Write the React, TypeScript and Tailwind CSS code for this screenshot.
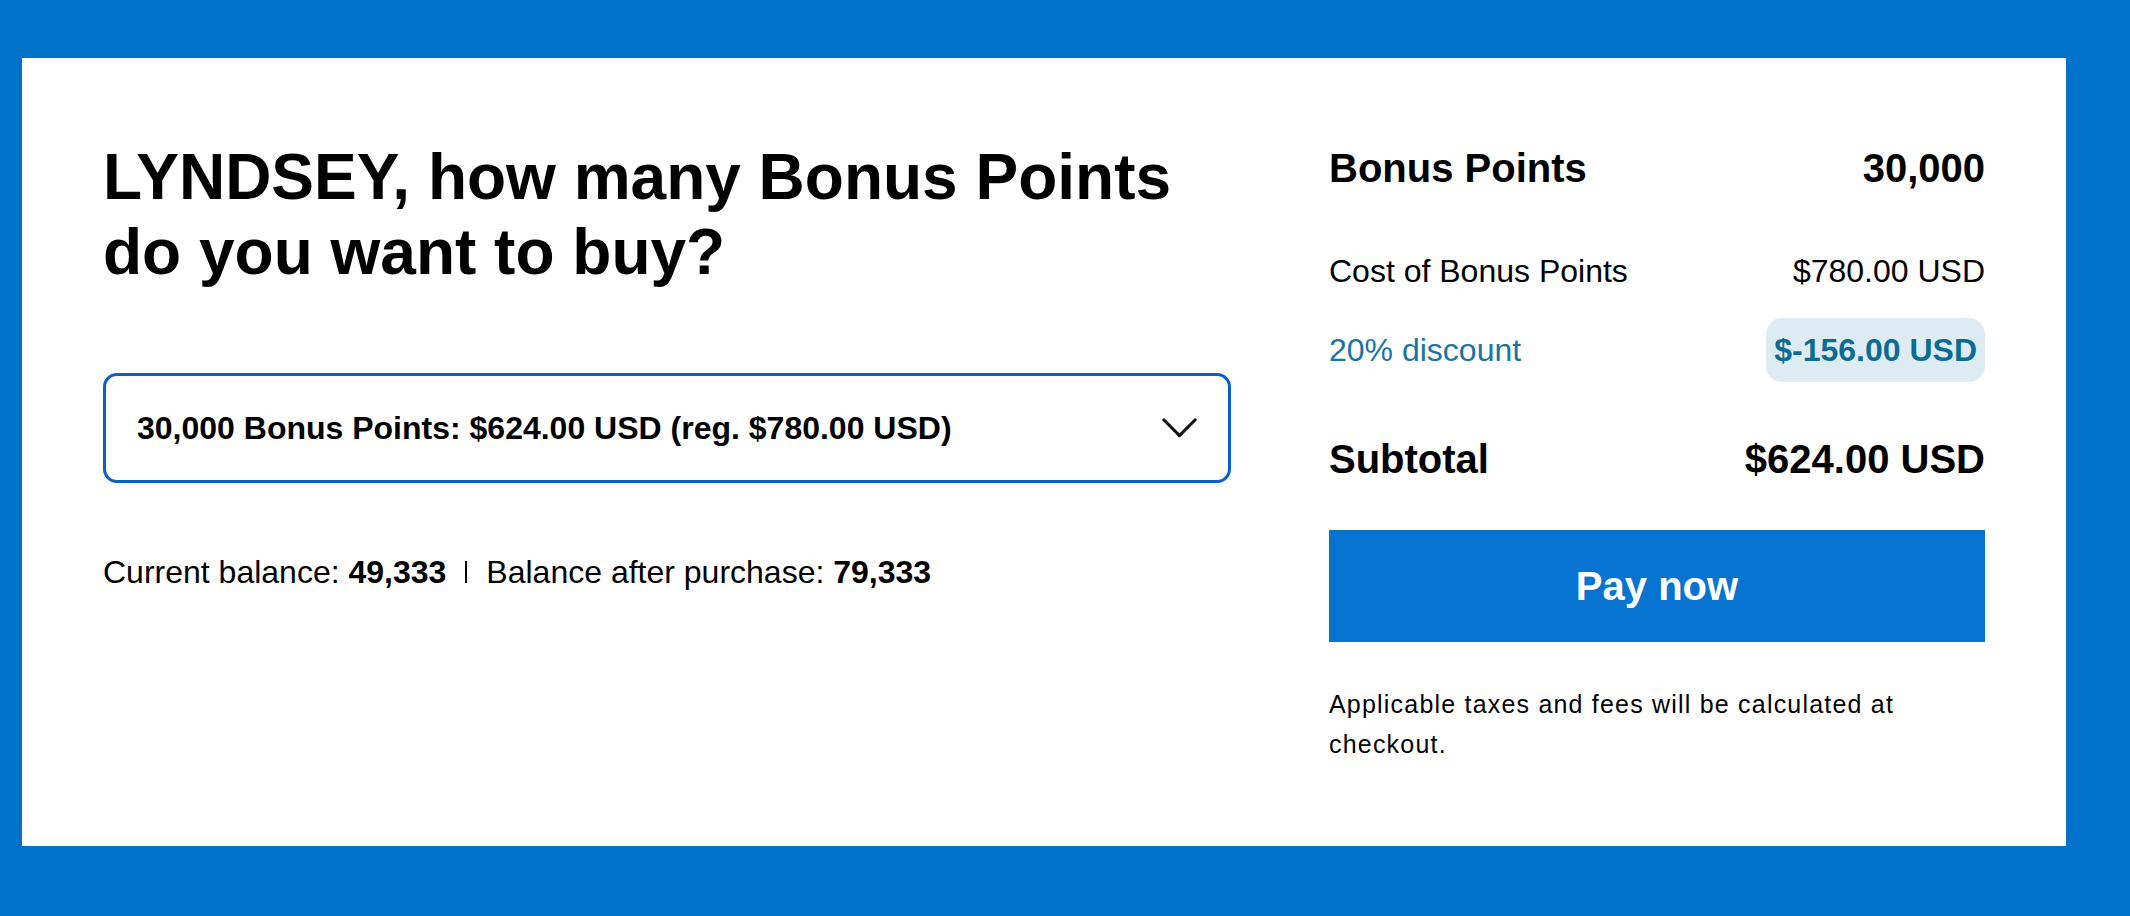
const FONT = "font-['Liberation_Sans',Arial,sans-serif]";

function Chevron() {
  return (
    <svg width="35" height="20" viewBox="0 0 35 20" fill="none" aria-hidden="true">
      <polyline points="1.8,1.8 17.5,17.6 33.2,1.8" stroke="#111" strokeWidth="3" strokeLinecap="round" strokeLinejoin="round" />
    </svg>
  );
}

function PointsPicker() {
  return (
    <div className="w-[1128px] shrink-0">
      <h1 className="text-[64px] leading-[75px] font-bold text-black">
        LYNDSEY, how many Bonus Points
        <br />
        do you want to buy?
      </h1>

      {/* select box */}
      <div className="mt-[83px] h-[110px] flex items-center justify-between px-[31px] border-[3px] border-[#0a5fc9] rounded-[14px] bg-white">
        <span className="text-[32px] leading-[40px] font-bold text-black">
          30,000 Bonus Points: $624.00 USD (reg. $780.00 USD)
        </span>
        <Chevron />
      </div>

      <p className="mt-[69px] text-[32px] leading-[40px] text-black">
        Current balance: <b className="font-bold">49,333</b>
        <span className="inline-block w-[2px] h-[22px] bg-black mx-[19px]" />
        Balance after purchase: <b className="font-bold">79,333</b>
      </p>
    </div>
  );
}

function OrderSummary() {
  return (
    <div className="w-[656px] shrink-0 mt-[4px] text-black">
      <div className="flex items-baseline justify-between h-[48px] text-[40px] leading-[48px] font-bold">
        <span>Bonus Points</span>
        <span>30,000</span>
      </div>

      <div className="mt-[59px] flex items-baseline justify-between text-[32px] leading-[40px]">
        <span>Cost of Bonus Points</span>
        <span>$780.00 USD</span>
      </div>

      <div className="mt-[27px] h-[64px] flex items-center justify-between text-[32px] leading-[40px]">
        <span className="text-[#1b75a2]">20% discount</span>
        <span className="h-[64px] flex items-center px-[8px] rounded-[16px] bg-[#ddecf3] font-bold text-[#0a6c94]">
          $-156.00 USD
        </span>
      </div>

      <div className="mt-[53px] flex items-baseline justify-between text-[40px] leading-[48px] font-bold">
        <span>Subtotal</span>
        <span>$624.00 USD</span>
      </div>

      <button className="mt-[47px] w-full h-[112px] bg-[#0774d1] text-white text-[40px] leading-[48px] font-bold">
        Pay now
      </button>

      <p className="mt-[42px] text-[25px] leading-[40px] tracking-[1.2px] text-black">
        Applicable taxes and fees will be calculated at checkout.
      </p>
    </div>
  );
}

export default function App() {
  return (
    <div className={`${FONT} w-[2130px] h-[916px] bg-[#0072ca] pt-[58px] pl-[22px] overflow-hidden`}>
      <div className="w-[2044px] h-[788px] bg-white flex gap-[98px] pt-[82px] px-[81px]">
        <PointsPicker />
        <OrderSummary />
      </div>
    </div>
  );
}
